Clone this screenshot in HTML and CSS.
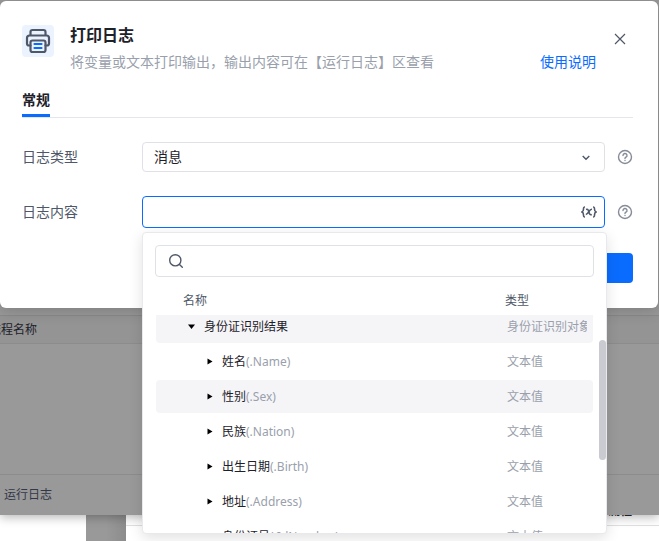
FILE: index.html
```html
<!DOCTYPE html>
<html lang="zh-CN">
<head>
    <meta charset="UTF-8">
    <meta name="viewport" content="width=device-width, initial-scale=1.0">
    <title>打印日志</title>
    <link rel="stylesheet" href="styles.css">
</head>

<body>

    <!-- dimmed editor window behind the dialog -->
    <div class="editor">
        <div class="editor-columns">
            <span class="editor-column">流程名称</span>
        </div>
        <div class="editor-body"></div>
        <div class="editor-footer">运行日志</div>
    </div>
    <div class="desktop">
        <div class="desktop-left"></div>
        <div class="desktop-gap"></div>
        <div class="desktop-right">
            <div class="desktop-title">流程</div>
        </div>
    </div>

    <div class="dialog" role="dialog" aria-labelledby="dialogTitle">
        <header class="dialog-header">
            <span class="dialog-icon">
                <svg viewBox="0 0 32 32" width="32" height="32" fill="none" stroke="#4e5868" stroke-width="2.2" stroke-linejoin="round" stroke-linecap="round">
                    <path d="M8.500 10V7a2 2 0 0 1 2-2h11a2 2 0 0 1 2 2v3"/>
                    <path d="M8.500 20.500H7a2 2 0 0 1-2-2V13a2.500 2.500 0 0 1 2.500-2.500h17A2.500 2.500 0 0 1 27 13v5.500a2 2 0 0 1-2 2h-1.500"/>
                    <path d="M8.500 17.500a2 2 0 0 1 2-2h11a2 2 0 0 1 2 2V25a2 2 0 0 1-2 2h-11a2 2 0 0 1-2-2z"/>
                    <path d="M12.500 19h7M12.500 23h7" stroke="#0a6cff"/>
                </svg>
            </span>
            <div class="dialog-heading">
                <h1 id="dialogTitle">打印日志</h1>
                <p>将变量或文本打印输出，输出内容可在【运行日志】区查看</p>
            </div>
            <a class="doc-link" href="#">使用说明</a>
            <button class="close" type="button" aria-label="关闭">
                <svg viewBox="0 0 12 12" width="12" height="12" stroke="#4e5868" stroke-width="1.2"><path d="M1 1l10 10M11 1L1 11"/></svg>
            </button>
        </header>

        <nav class="tabs">
            <a class="tab" href="#">常规</a>
        </nav>

        <form class="form">
            <div class="form-row">
                <label for="logType">日志类型</label>
                <div class="control">
                    <select id="logType" class="field">
                        <option>消息</option>
                    </select>
                    <svg class="chevron" viewBox="0 0 8 6" width="8" height="6" fill="none" stroke="#4e5868" stroke-width="1.4"><path d="M.7 1L4 4.300 7.300 1"/></svg>
                </div>
                <svg class="help" viewBox="0 0 16 16" width="16" height="16" fill="none" stroke="#868b98" stroke-width="1.400" stroke-linecap="round"><circle cx="8" cy="8" r="6.500"/><path d="M6 6.500a2 2 0 1 1 3 1.700c-.7.400-1 .7-1 1.300"/><path d="M8 11.500v.1"/></svg>
            </div>

            <div class="form-row">
                <label for="logContent">日志内容</label>
                <div class="control">
                    <input id="logContent" class="field field-active" type="text">
                    <button class="insert-var" type="button" aria-label="插入变量">
                        <svg viewBox="0 0 16 12" width="16" height="12" fill="none" stroke="#4e5868" stroke-width="1.600"><path d="M4 1C2.500 1 2.500 1.500 2.500 3s0 2.500-1.500 3c1.500.5 1.500 1.500 1.500 3s0 2 1.500 2M12 1c1.500 0 1.500.5 1.500 2s0 2.500 1.500 3c-1.500.5-1.500 1.500-1.500 3s0 2-1.500 2"/><path d="M5 3.500c1.500-.6 2 0 2.500 1.500l1 2.500c.4 1.200 1 1.500 2.300 1M11 3.300c-1.400-.2-2 .5-3 2.200s-1.600 3-3.200 3"/></svg>
                    </button>

                    <div class="picker">
                        <div class="search">
                            <svg viewBox="0 0 16 16" width="16" height="16" fill="none" stroke="#4e5868" stroke-width="1.400" stroke-linecap="round"><circle cx="7.300" cy="7.300" r="5.600"/><path d="M11.500 11.500l2.800 2.800"/></svg>
                            <input type="search" aria-label="搜索">
                        </div>
                        <table class="vars">
                            <thead>
                                <tr><th>名称</th><th>类型</th></tr>
                            </thead>
                            <tbody>
                                <tr class="parent shaded">
                                    <td><svg class="arrow" viewBox="0 0 8 8" width="8" height="8"><path d="M0 1.500h7L3.500 6z"/></svg>身份证识别结果</td>
                                    <td>身份证识别对象</td>
                                </tr>
                                <tr>
                                    <td><svg class="arrow" viewBox="0 0 8 8" width="8" height="8"><path d="M1.500 .5v6l5-3z"/></svg>姓名<span>(.Name)</span></td>
                                    <td>文本值</td>
                                </tr>
                                <tr class="shaded">
                                    <td><svg class="arrow" viewBox="0 0 8 8" width="8" height="8"><path d="M1.500 .5v6l5-3z"/></svg>性别<span>(.Sex)</span></td>
                                    <td>文本值</td>
                                </tr>
                                <tr>
                                    <td><svg class="arrow" viewBox="0 0 8 8" width="8" height="8"><path d="M1.500 .5v6l5-3z"/></svg>民族<span>(.Nation)</span></td>
                                    <td>文本值</td>
                                </tr>
                                <tr>
                                    <td><svg class="arrow" viewBox="0 0 8 8" width="8" height="8"><path d="M1.500 .5v6l5-3z"/></svg>出生日期<span>(.Birth)</span></td>
                                    <td>文本值</td>
                                </tr>
                                <tr>
                                    <td><svg class="arrow" viewBox="0 0 8 8" width="8" height="8"><path d="M1.500 .5v6l5-3z"/></svg>地址<span>(.Address)</span></td>
                                    <td>文本值</td>
                                </tr>
                                <tr>
                                    <td><svg class="arrow" viewBox="0 0 8 8" width="8" height="8"><path d="M1.500 .5v6l5-3z"/></svg>身份证号<span>(.IdNumber)</span></td>
                                    <td>文本值</td>
                                </tr>
                            </tbody>
                        </table>
                        <div class="scroll-thumb"></div>
                    </div>
                </div>
                <svg class="help" viewBox="0 0 16 16" width="16" height="16" fill="none" stroke="#868b98" stroke-width="1.400" stroke-linecap="round"><circle cx="8" cy="8" r="6.500"/><path d="M6 6.500a2 2 0 1 1 3 1.700c-.7.400-1 .7-1 1.300"/><path d="M8 11.500v.1"/></svg>
            </div>

            <div class="actions">
                <button class="confirm" type="submit">确定</button>
            </div>
        </form>
    </div>

</body>
</html>
```
FILE: styles.css
```css
* {
    margin: 0;
    padding: 0;
    box-sizing: border-box;
}

body {
    display: flex;
    flex-direction: column;
    height: 100vh;
    overflow: hidden;
    position: relative;
    font-family: "Noto Sans", "Noto Sans CJK SC", sans-serif;
    font-size: 14px;
    line-height: 20px;
    color: #1d2129;
    background: #fff;
}

button,
input,
select {
    font: inherit;
    color: inherit;
}

a {
    text-decoration: none;
}

svg {
    display: block;
    flex: none;
}

/* Editor behind the dialog */
.editor {
    flex: 1;
    display: flex;
    flex-direction: column;
    padding-top: 315px;
    background: #999;
    font-size: 12px;
    box-shadow: 0 2px 10px rgba(0, 0, 0, 0.3);
    z-index: 1;
}

.editor-columns {
    display: flex;
    height: 29px;
    align-items: center;
    border-top: 1px solid #8a8a8a;
    border-bottom: 1px solid #8c8c8c;
    background: #949494;
    overflow: hidden;
}

.editor-column {
    width: 142px;
    margin-left: -11px;
    color: #1d2129;
}

.editor-body {
    flex: 1;
}

.editor-footer {
    height: 41px;
    padding: 10px 4px;
    border-top: 1px solid #8c8c8c;
    color: #333848;
}

.desktop {
    display: flex;
    height: 26px;
}

.desktop-left {
    width: 86px;
}

.desktop-gap {
    width: 40px;
    background: linear-gradient(90deg, #999 50%, #8c8c8c);
}

.desktop-right {
    position: relative;
    z-index: 1;
    flex: 1;
    height: 11px;
    border-bottom: 1px solid #ddd;
}

.desktop-title {
    display: flex;
    justify-content: flex-end;
    align-items: flex-end;
    height: 2px;
    padding-right: 27px;
    overflow: hidden;
    font-size: 12px;
    line-height: 12px;
    font-weight: bold;
}

/* Dialog */
.dialog {
    position: absolute;
    top: 1px;
    left: 0;
    right: 1px;
    z-index: 2;
    padding: 24px 25px 25px 22px;
    border-radius: 6px;
    background: #fff;
    box-shadow: 0 2px 16px rgba(0, 0, 0, 0.2);
}

.dialog-header {
    display: flex;
    align-items: flex-start;
}

.dialog-icon {
    border-radius: 4px;
    background: #ebf3ff;
}

.dialog-heading {
    flex: 1;
    margin-left: 16px;
}

.dialog-heading h1 {
    font-size: 16px;
    line-height: 20px;
    font-weight: bold;
}

.dialog-heading p {
    margin-top: 7px;
    color: #9a9fac;
    white-space: nowrap;
}

.doc-link {
    margin-top: 27px;
    color: #0a6cff;
}

.close {
    margin: 8px 7px 0 18px;
    border: none;
    background: none;
    cursor: pointer;
}

.tabs {
    display: flex;
    height: 28px;
    margin-top: 18px;
    border-bottom: 1px solid #e5e6eb;
}

.tab {
    height: 27px;
    border-bottom: 3px solid #0a6cff;
    color: #1d2129;
    font-weight: bold;
}

.form-row {
    display: flex;
    align-items: center;
    margin-top: 24px;
}

.form-row label {
    width: 120px;
    color: #4e5868;
}

.control {
    position: relative;
    flex: 1;
}

.field {
    display: block;
    width: 100%;
    height: 30px;
    padding: 0 11px;
    border: 1px solid #e0e1e6;
    border-radius: 4px;
    background: #fff;
    appearance: none;
    outline: none;
}

.field-active {
    height: 32px;
    border-color: #0a6cff;
}

.chevron {
    position: absolute;
    top: 13px;
    right: 15px;
    pointer-events: none;
}

.insert-var {
    position: absolute;
    top: 10px;
    right: 8px;
    border: none;
    background: none;
    cursor: pointer;
}

.help {
    margin-left: 12px;
}

.actions {
    display: flex;
    justify-content: flex-end;
    margin-top: 25px;
}

.confirm {
    width: 90px;
    height: 30px;
    border: none;
    border-radius: 4px;
    background: #0a6cff;
    color: #fff;
    cursor: pointer;
}

/* Variable picker */
.picker {
    position: absolute;
    top: 36px;
    left: 0;
    right: -2px;
    z-index: 3;
    height: 302px;
    padding: 12px;
    border: 1px solid #e9e9eb;
    border-radius: 4px;
    background: #fff;
    box-shadow: 0 4px 14px rgba(0, 0, 0, 0.12);
    font-size: 12px;
    overflow: hidden;
}

.search {
    display: flex;
    align-items: center;
    height: 32px;
    padding: 0 12px;
    border: 1px solid #e0e1e6;
    border-radius: 4px;
}

.search input {
    flex: 1;
    margin-left: 8px;
    border: none;
    outline: none;
    background: none;
}

.vars {
    display: block;
    margin: 14px 1px 0;
}

.vars thead,
.vars tbody {
    display: block;
}

.vars tr {
    display: grid;
    grid-template-columns: 1fr 80px;
    align-items: center;
    height: 33px;
    margin-bottom: 2px;
    padding: 0 6px 0 50px;
    border-radius: 4px;
}

.vars thead tr {
    height: 20px;
    margin-bottom: 4px;
    padding: 0 8px 0 27px;
}

.vars th {
    text-align: left;
    font-weight: normal;
    color: #4e5868;
}

.vars tbody {
    height: 220px;
    overflow: hidden;
}

/* list is scrolled a little past its first row */
.vars tbody tr:first-child {
    margin-top: -5px;
}

.vars .parent {
    padding-left: 32px;
}

.vars .shaded {
    background: #f5f5f8;
}

.vars td {
    display: flex;
    align-items: center;
    overflow: hidden;
    white-space: nowrap;
}

.vars td span,
.vars td:last-child {
    color: #9a9fac;
}

.arrow {
    margin-right: 8px;
    fill: #000;
}

.scroll-thumb {
    position: absolute;
    top: 107px;
    right: 0;
    width: 7px;
    height: 120px;
    border-radius: 4px;
    background: #c9cbd1;
}
```
